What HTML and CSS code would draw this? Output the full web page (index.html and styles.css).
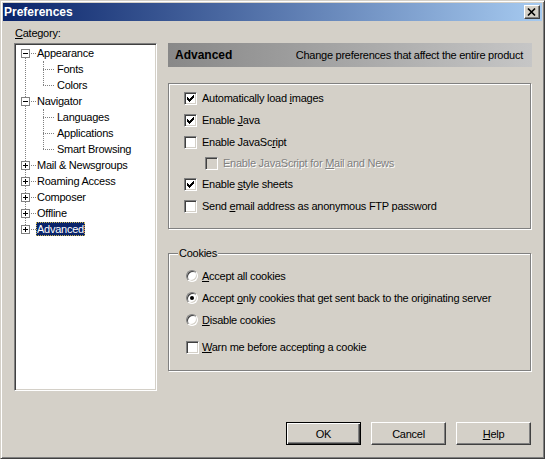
FILE: index.html
```html
<!DOCTYPE html>
<html>
<head>
<meta charset="utf-8">
<title>Preferences</title>
<link rel="stylesheet" href="styles.css">
</head>
<body>
<div class="window">
  <div class="titlebar">
    <span class="title">Preferences</span>
    <span class="close-btn"><svg width="14" height="12" viewBox="0 0 14 12"><path d="M3 2.5L10 9.5M10 2.5L3 9.5" stroke="#000" stroke-width="1.7" fill="none"/></svg></span>
  </div>
  <div class="body">
    <div class="top">
      <div class="cat-label"><u>C</u>ategory:</div>
      <div class="tree-box"></div>
      <div class="tree">
        <ul class="lvl0">
          <li>
            <div class="row"><span class="exp minus"></span><span class="conn"></span><span class="lbl">Appearance</span></div>
            <ul class="lvl1">
              <li><div class="row child"><span class="conn1"></span><span class="lbl">Fonts</span></div></li>
              <li><div class="row child"><span class="conn1"></span><span class="lbl">Colors</span></div></li>
            </ul>
          </li>
          <li>
            <div class="row"><span class="exp minus"></span><span class="conn"></span><span class="lbl">Navigator</span></div>
            <ul class="lvl1">
              <li><div class="row child"><span class="conn1"></span><span class="lbl">Languages</span></div></li>
              <li><div class="row child"><span class="conn1"></span><span class="lbl">Applications</span></div></li>
              <li><div class="row child"><span class="conn1"></span><span class="lbl">Smart Browsing</span></div></li>
            </ul>
          </li>
          <li><div class="row"><span class="exp plus"></span><span class="conn"></span><span class="lbl">Mail &amp; Newsgroups</span></div></li>
          <li><div class="row"><span class="exp plus"></span><span class="conn"></span><span class="lbl">Roaming Access</span></div></li>
          <li><div class="row"><span class="exp plus"></span><span class="conn"></span><span class="lbl">Composer</span></div></li>
          <li><div class="row"><span class="exp plus"></span><span class="conn"></span><span class="lbl">Offline</span></div></li>
          <li><div class="row"><span class="exp plus"></span><span class="conn"></span><span class="lbl selected">Advanced</span></div></li>
        </ul>
      </div>
      <div class="panel">
        <div class="header">
          <span class="h-title">Advanced</span>
          <span class="h-desc">Change preferences that affect the entire product</span>
        </div>
        <div class="group g1">
          <div class="opt"><span class="cb checked"></span><span>Automatically load <u>i</u>mages</span></div>
          <div class="opt"><span class="cb checked"></span><span>Enable <u>J</u>ava</span></div>
          <div class="opt"><span class="cb"></span><span>Enable JavaSc<u>r</u>ipt</span></div>
          <div class="opt sub disabled"><span class="cb"></span><span>Enable JavaScript for <u>M</u>ail and News</span></div>
          <div class="opt"><span class="cb checked"></span><span>Enable <u>s</u>tyle sheets</span></div>
          <div class="opt"><span class="cb"></span><span>Send <u>e</u>mail address as anonymous FTP password</span></div>
        </div>
        <div class="group g2">
          <span class="legend">Cookies</span>
          <div class="opt"><span class="rb"></span><span><u>A</u>ccept all cookies</span></div>
          <div class="opt"><span class="rb on"></span><span>Accept <u>o</u>nly cookies that get sent back to the originating server</span></div>
          <div class="opt"><span class="rb"></span><span><u>D</u>isable cookies</span></div>
          <div class="opt warn"><span class="cb"></span><span><u>W</u>arn me before accepting a cookie</span></div>
        </div>
      </div>
    </div>
    <div class="buttons">
      <span class="btn default">OK</span>
      <span class="btn">Cancel</span>
      <span class="btn"><u>H</u>elp</span>
    </div>
  </div>
</div>
</body>
</html>
```
FILE: styles.css
```css
* { box-sizing: border-box; }
html, body { margin: 0; padding: 0; }
body {
  font-family: "Liberation Sans", Arial, sans-serif;
  font-size: 11px;
  letter-spacing: -0.25px;
  color: #000;
  background: #d4d0c8;
}
ul { list-style: none; margin: 0; padding: 0; }
u { text-decoration: underline; text-underline-offset: 1px; }

.window {
  width: 545px;
  height: 459px;
  background: #d4d0c8;
  border: 1px solid;
  border-color: #d4d0c8 #404040 #404040 #d4d0c8;
  box-shadow: inset 1px 1px #fff, inset -1px -1px #808080;
  padding: 2px;
  display: flex;
  flex-direction: column;
}

.titlebar {
  height: 18px;
  flex: none;
  background: linear-gradient(to right, #0a246a, #a6caf0);
  display: flex;
  align-items: center;
  justify-content: space-between;
  padding: 0 2px 0 1px;
}
.title {
  color: #fff;
  font-weight: bold;
  font-size: 12px;
  letter-spacing: 0;
  line-height: 18px;
}
.close-btn {
  width: 16px;
  height: 14px;
  background: #d4d0c8;
  border: 1px solid;
  border-color: #fff #404040 #404040 #fff;
  box-shadow: inset -1px -1px #808080;
  display: flex;
  align-items: center;
  justify-content: center;
  padding-bottom: 1px;
}
.close-btn svg { display: block; }

.body {
  flex: 1;
  padding: 6px 10px 0 11px;
  display: flex;
  flex-direction: column;
}

.top {
  display: grid;
  grid-template-columns: 143px 364px;
  grid-template-rows: 16px 348px;
  column-gap: 11px;
}
.cat-label {
  grid-column: 1;
  grid-row: 1;
  line-height: 13px;
  padding-left: 1px;
}
.tree-box {
  grid-column: 1;
  grid-row: 2;
  background: #fff;
  border: 1px solid;
  border-color: #808080 #fff #fff #808080;
  box-shadow: inset 1px 1px #404040, inset -1px -1px #d4d0c8;
}
.tree {
  grid-column: 1;
  grid-row: 2;
  padding: 2px 0 0 7px;
}

.lvl0 { position: relative; }
.lvl0::before {
  content: "";
  position: absolute;
  left: 4px;
  top: 8px;
  bottom: 8px;
  border-left: 1px dotted #808080;
}
.lvl1 { position: relative; }
.lvl1::before {
  content: "";
  position: absolute;
  left: 22px;
  top: 0;
  bottom: 8px;
  border-left: 1px dotted #808080;
}
.row {
  height: 16px;
  display: flex;
  align-items: center;
  position: relative;
}
.exp {
  width: 9px;
  height: 9px;
  border: 1px solid #808080;
  background: #fff;
  position: relative;
  flex: none;
}
.exp::before {
  content: "";
  position: absolute;
  left: 1px;
  top: 3px;
  width: 5px;
  height: 1px;
  background: #000;
}
.exp.plus::after {
  content: "";
  position: absolute;
  left: 3px;
  top: 1px;
  width: 1px;
  height: 5px;
  background: #000;
}
.conn {
  width: 5px;
  margin-left: 1px;
  border-top: 1px dotted #808080;
  flex: none;
}
.conn1 {
  width: 11px;
  margin-left: 22px;
  border-top: 1px dotted #808080;
  flex: none;
}
.lbl {
  padding: 0 1px;
  line-height: 14px;
  white-space: nowrap;
}
.row.child .lbl { margin-left: 2px; }
.lbl.selected {
  background: #0a246a;
  color: #fff;
  outline: 1px dotted #c8b450;
  outline-offset: -1px;
}

.panel {
  grid-column: 2;
  grid-row: 2;
  display: flex;
  flex-direction: column;
}
.header {
  height: 24px;
  background: linear-gradient(to right, #888888, #c6c6c6);
  display: flex;
  align-items: center;
  justify-content: space-between;
  padding: 0 9px 0 7px;
}
.h-title { font-weight: bold; font-size: 12px; letter-spacing: 0; }

.group {
  border: 1px solid #808080;
  box-shadow: inset 1px 1px #fff, 1px 1px 0 #fff;
  margin-right: 1px;
  position: relative;
}
.g1 {
  margin-top: 16px;
  padding: 3px 0 11px 15px;
}
.g2 {
  margin-top: 24px;
  padding: 11px 0 12px 17px;
}
.legend {
  position: absolute;
  top: -7px;
  left: 9px;
  padding: 0 1px;
  line-height: 13px;
  background: #d4d0c8;
}
.opt {
  height: 22px;
  display: flex;
  align-items: center;
  white-space: nowrap;
}
.g1 .opt .cb { margin-right: 5px; }
.opt.sub { height: 20px; padding-left: 21px; }
.opt.warn { margin-top: 5px; }
.g2 .opt .cb { margin-right: 3px; }
.g2 .opt .rb { margin-right: 4px; }

.cb {
  width: 13px;
  height: 13px;
  flex: none;
  background: #fff;
  border: 1px solid;
  border-color: #808080 #fff #fff #808080;
  box-shadow: inset 1px 1px #404040, inset -1px -1px #d4d0c8;
  position: relative;
}
.cb.checked::after {
  content: "";
  position: absolute;
  left: 2px;
  top: 2px;
  width: 7px;
  height: 7px;
  background:
    linear-gradient(#000, #000) 0 2px / 1px 3px no-repeat,
    linear-gradient(#000, #000) 1px 3px / 1px 3px no-repeat,
    linear-gradient(#000, #000) 2px 4px / 1px 3px no-repeat,
    linear-gradient(#000, #000) 3px 3px / 1px 3px no-repeat,
    linear-gradient(#000, #000) 4px 2px / 1px 3px no-repeat,
    linear-gradient(#000, #000) 5px 1px / 1px 3px no-repeat,
    linear-gradient(#000, #000) 6px 0 / 1px 3px no-repeat;
}
.disabled .cb { background: #d4d0c8; }
.disabled span:last-child {
  color: #808080;
  text-shadow: 1px 1px 0 #fff;
}

.rb {
  width: 12px;
  height: 12px;
  flex: none;
  border-radius: 50%;
  background: #fff;
  border: 1px solid;
  border-color: #808080 #fff #fff #808080;
  box-shadow: inset 1px 1px #404040, inset -1px -1px #d4d0c8;
  position: relative;
}
.rb.on::after {
  content: "";
  position: absolute;
  left: 3px;
  top: 3px;
  width: 4px;
  height: 4px;
  border-radius: 50%;
  background: #000;
}

.buttons {
  margin-top: 31px;
  display: flex;
  justify-content: flex-end;
  gap: 10px;
  padding-right: 1px;
}
.btn {
  width: 75px;
  height: 23px;
  display: flex;
  align-items: center;
  justify-content: center;
  background: #d4d0c8;
  border: 1px solid;
  border-color: #fff #404040 #404040 #fff;
  box-shadow: inset -1px -1px #808080;
}
.btn.default {
  border: 1px solid #000;
  box-shadow: inset 1px 1px #fff, inset -1px -1px #404040, inset -2px -2px #808080;
}
```
